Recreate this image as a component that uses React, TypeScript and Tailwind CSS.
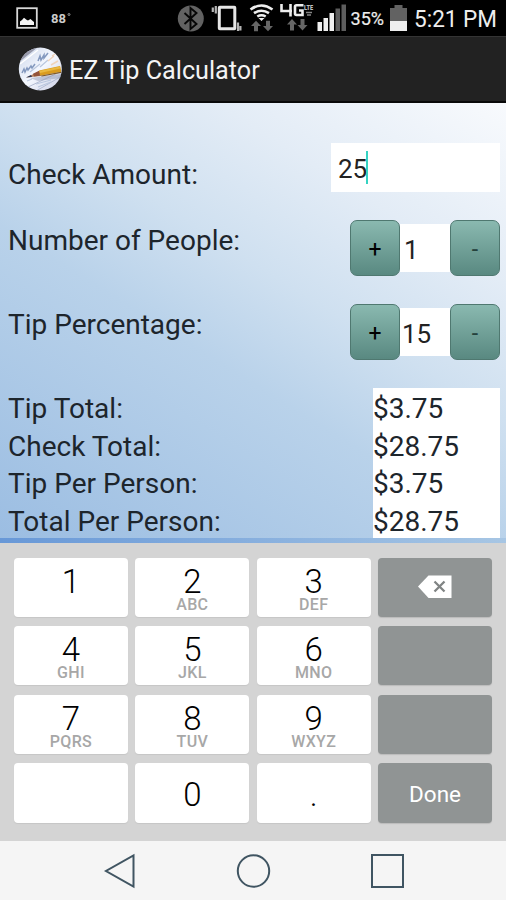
import React from "react";

function StatusBar() {
  return (
    <div className="flex h-9 shrink-0 items-start bg-black text-[#eeeeee]">
      <svg width="506" height="36" viewBox="0 0 506 36" role="img" aria-label="Status icons">
        {/* picture notification */}
        <rect x="17.2" y="8.2" width="19.6" height="19.6" fill="none" stroke="#d8d8d8" strokeWidth="1.8" />
        <path d="M20 25V21.5l2-1.5 2-2.2 2.5 2 1.5.8 2.5-1.6 2.5 2.2 1 .8v3z" fill="#f4f4f4" />
        <text x="51" y="23" fontFamily="Roboto" fontWeight="700" fontSize="13" fill="#cccccc">88</text>
        <circle cx="69" cy="14.5" r="1" fill="none" stroke="#b4b4b4" strokeWidth=".8" />
        {/* bluetooth */}
        <circle cx="190.8" cy="18.500" r="13" fill="#626262" />
        <path d="M184.500 13l12 11-6 5V8l6 5-12 11" fill="none" stroke="#060606" strokeWidth="1.900" />
        {/* vibrate */}
        <rect x="219.300" y="7.200" width="15.500" height="21.600" rx=".5" fill="none" stroke="#e6e6e6" strokeWidth="3" />
        <path d="M215.800 6v7.500M212.800 7.500v4.500M238 22.500v8.500M240.400 26v4.500" stroke="#b5b5b5" strokeWidth="2.200" />
        {/* wifi */}
        <path d="M250.500 9.500q11-8 22 0M254 13.200q7.500-5 15 0M257.300 16.500q4.200-2.500 8.400 0" fill="none" stroke="#eeeeee" strokeWidth="2.600" />
        <path d="M258.500 18h6l-3 3z" fill="#eee" />
        <g fill="#666666">
          <path d="M256 20.800l5 5.200h-3v5.200h-4V26h-3z" />
          <path d="M268 31.200l5-5.200h-3v-5.200h-4V26h-3z" />
          <path d="M292 19l5 5.500h-3v6h-4v-6h-3z" />
          <path d="M302.500 30.500l5-5.500h-3V19h-4v6h-3z" />
        </g>
        {/* 4G LTE */}
        <path d="M281.500 4v7h10.500M290.500 4v12.500M303.500 5.200h-7q-1.500 0-1.500 1.500v6.800q0 1.500 1.500 1.500h6v-4.500h-3.500" fill="none" stroke="#ededed" strokeWidth="2.600" />
        <text x="304" y="9.500" fontFamily="Roboto" fontWeight="900" fontSize="7" fill="#c0c0c0" textLength="9" lengthAdjust="spacingAndGlyphs">LTE</text>
        <path d="M306 12.500h6M307 15h4" stroke="#858585" strokeWidth="1.500" />
        {/* signal */}
        <g fill="#f0f0f0">
          <rect x="317.500" y="22" width="4.500" height="9" />
          <rect x="323.500" y="18" width="4.500" height="13" />
          <rect x="329.500" y="13" width="4.500" height="18" />
        </g>
        <rect x="335.500" y="8.500" width="4.500" height="22.500" fill="#5d5d5d" />
        <rect x="341.500" y="4.500" width="4.500" height="26.500" fill="#5d5d5d" />
        <text x="350.500" y="25" fontFamily="Roboto" fontSize="18.500" fill="#ededed" stroke="#ededed" strokeWidth=".2" textLength="33.500" lengthAdjust="spacingAndGlyphs">35%</text>
        {/* battery */}
        <path d="M390 8h4.500V5h8v3h4.500v13.500h-17z" fill="#626262" />
        <rect x="390" y="21" width="17" height="10" fill="#eeeeee" />
        <text x="414" y="27" fontFamily="Roboto" fontSize="23.500" fill="#eeeeee" textLength="83" lengthAdjust="spacingAndGlyphs">5:21 PM</text>
      </svg>
    </div>
  );
}

function AppLogo() {
  return (
    <svg width="44" height="44" viewBox="0 0 44 44" aria-hidden="true">
      <defs>
        <clipPath id="disc"><circle cx="22.300" cy="22" r="21.500" /></clipPath>
        <linearGradient id="paper" x1="0" y1="0" x2="1" y2="1">
          <stop offset="0" stopColor="#c9d4e8" />
          <stop offset=".5" stopColor="#f5f8ff" />
          <stop offset="1" stopColor="#c9cde3" />
        </linearGradient>
      </defs>
      <g clipPath="url(#disc)">
        <rect width="44" height="44" fill="url(#paper)" />
        <path d="M0 16L20 0H9L0 7z" fill="#9799aa" />
        <path d="M2 17L20 3" stroke="#fff" strokeWidth="1.500" />
        <path d="M18 44l26-15M8 41l36-17" stroke="#b3bbd2" strokeWidth="1" />
        <path d="M4 26l2-4 1 3 2-4 1 2 3-4 1 2 3-4M20 14l2-5 1 4 3-5 0 3 4-5" fill="none" stroke="#8499bf" strokeWidth="1.500" />
        <path d="M12 25l10-8M22 20l8-7M9 34l5-2M18 37l15-4M20 40l13-5" fill="none" stroke="#bac7de" strokeWidth="1.200" />
        <path d="M30 14l6-5M33 18l7-4M34 9l3-2" stroke="#efd3bb" strokeWidth="1.500" />
        <path d="M12 31l31-4v4L20 34z" fill="#8992ae" opacity=".45" />
        <path d="M8 30.500l14-6.500 1 5z" fill="#b98765" />
        <path d="M8 30.500l5-2.500 1 2z" fill="#293657" />
        <path d="M21 23.500L42 19l1.500 5.800L22 28.800z" fill="#d99b20" />
        <path d="M21 24l21-4.500.5 2L22 26z" fill="#e9b840" />
        <path d="M22 28.800l21-4v1.300l-19 3.400z" fill="#805a27" />
        <path d="M15 26.800l6-3 1 5-6 .8z" fill="#93533a" />
      </g>
    </svg>
  );
}

function Stepper({ value, pad }: { value: string; pad: string }) {
  const button =
    "flex h-14 w-[50px] items-center justify-center rounded-[7px] border border-[#4f7870] bg-linear-to-b from-[#8ab9b0] to-[#598981] text-[23px] text-black";
  return (
    <div className="flex h-14 items-center">
      <button className={button}><span className="pt-[4px]">+</span></button>
      <div className={"flex h-12 w-[50px] items-center bg-white pt-[5px] text-[26px] text-[#222] " + pad}>{value}</div>
      <button className={button}><span className="pt-[4px] text-[#24423c]">-</span></button>
    </div>
  );
}

const totals = [
  ["Tip Total:", "$3.75"],
  ["Check Total:", "$28.75"],
  ["Tip Per Person:", "$3.75"],
  ["Total Per Person:", "$28.75"],
];

function Key({ digit, letters }: { digit: string; letters?: string }) {
  return (
    <button className="flex h-full flex-col items-center rounded-[4px] bg-white pt-[7px] text-black shadow-[0_1px_1px_#c6c6c6]">
      <span className="text-[33px] leading-[33px] font-light">{digit}</span>
      {letters && <span className="-mt-[1px] text-[16px] leading-[16px] font-medium tracking-[0.3px] text-[#a7a7a7]">{letters}</span>}
    </button>
  );
}

function Keypad() {
  const dark = "flex h-full items-center justify-center rounded-[4px] bg-[#909494] text-white shadow-[0_1px_1px_#bbbbbb]";
  return (
    <div className="grid h-[298px] shrink-0 grid-cols-4 grid-rows-4 gap-x-[7.500px] gap-y-[9.500px] bg-[#d4d4d4] pt-[14.500px] pr-[14px] pb-[18.500px] pl-[14px]">
      <Key digit="1" />
      <Key digit="2" letters="ABC" />
      <Key digit="3" letters="DEF" />
      <button className={dark} aria-label="Delete">
        <svg width="34" height="24" viewBox="0 0 34 24">
          <path d="M0 11.500L10.500.5H33.500v22.500H10.500z" fill="white" />
          <path d="M16.500 6.500l10 10M26.500 6.500l-10 10" stroke="#808484" strokeWidth="2.300" />
        </svg>
      </button>
      <Key digit="4" letters="GHI" />
      <Key digit="5" letters="JKL" />
      <Key digit="6" letters="MNO" />
      <div className={dark} />
      <Key digit="7" letters="PQRS" />
      <Key digit="8" letters="TUV" />
      <Key digit="9" letters="WXYZ" />
      <div className={dark} />
      <div className="rounded-[4px] bg-white shadow-[0_1px_1px_#c6c6c6]" />
      <button className="flex items-center justify-center rounded-[4px] bg-white pt-[4px] text-[33px] font-light shadow-[0_1px_1px_#c6c6c6]">0</button>
      <button className="flex items-center justify-center rounded-[4px] bg-white pt-[4px] text-[33px] font-light shadow-[0_1px_1px_#c6c6c6]">.</button>
      <button className={dark + " text-[22.500px]"}><span className="pt-[3px]">Done</span></button>
    </div>
  );
}

export default function App() {
  return (
    <div className="flex h-[900px] w-[506px] flex-col overflow-hidden font-['Roboto',sans-serif]">
      <StatusBar />
      <header className="flex h-[67px] shrink-0 items-center border-t border-b-2 border-t-[#343434] border-b-[#090909] bg-[#222222] pl-[18px]">
        <AppLogo />
        <h1 className="ml-[7px] pt-[4px] text-[25.200px] whitespace-nowrap text-[#f4f4f4]">EZ Tip Calculator</h1>
      </header>
      <main className="flex h-[440px] shrink-0 flex-col bg-[linear-gradient(32deg,#9bbde2_0%,#b9d2ea_42%,#cfe0f0_58%,#e3ecf6_76%,#f8fafd_100%)] text-[28px] text-[#1d252c]">
        <div className="flex h-[89px] items-end justify-between pr-[6px] pl-2">
          <span className="leading-[35px]">Check Amount:</span>
          <div className="flex h-[49px] w-[169px] items-center bg-white pl-[7px] text-[26px] text-[#222]">
            <span className="pt-[4px]">25</span>
            <span className="-ml-px h-[33px] w-[2px] bg-[#35d3c2]" />
          </div>
        </div>
        <div className="mt-[28px] flex h-[56px] items-start justify-between pr-[6px] pl-2">
          <span className="pt-[2px] leading-[37px]">Number of People:</span>
          <Stepper value="1" pad="pl-[4px]" />
        </div>
        <div className="mt-[28px] flex h-[56px] items-start justify-between pr-[6px] pl-2">
          <span className="pt-[2px] leading-[37px]">Tip Percentage:</span>
          <Stepper value="15" pad="pl-[2px]" />
        </div>
        <div className="mt-[28px] flex h-[150px] justify-between pr-[6px] pl-2 leading-[37.500px]">
          <div className="pt-[2px]">
            {totals.map(([label]) => <div key={label}>{label}</div>)}
          </div>
          <div className="w-[127px] overflow-hidden bg-white pt-[2px]">
            {totals.map(([label, amount]) => <div key={label}>{amount}</div>)}
          </div>
        </div>
        <div className="h-[5px] bg-linear-to-r from-[#6898d7] to-[#a7c6e4]" />
      </main>
      <Keypad />
      <nav className="flex h-[59px] shrink-0 items-start bg-[#f5f5f5]">
        <svg width="506" height="59" viewBox="0 0 506 59" fill="none" stroke="#405562" strokeWidth="2" role="img" aria-label="Back, home, recent apps">
          <path d="M133.500 14.500v31L106 30z" />
          <circle cx="253.500" cy="30" r="15.700" />
          <rect x="372" y="14" width="31" height="32" />
        </svg>
      </nav>
    </div>
  );
}
